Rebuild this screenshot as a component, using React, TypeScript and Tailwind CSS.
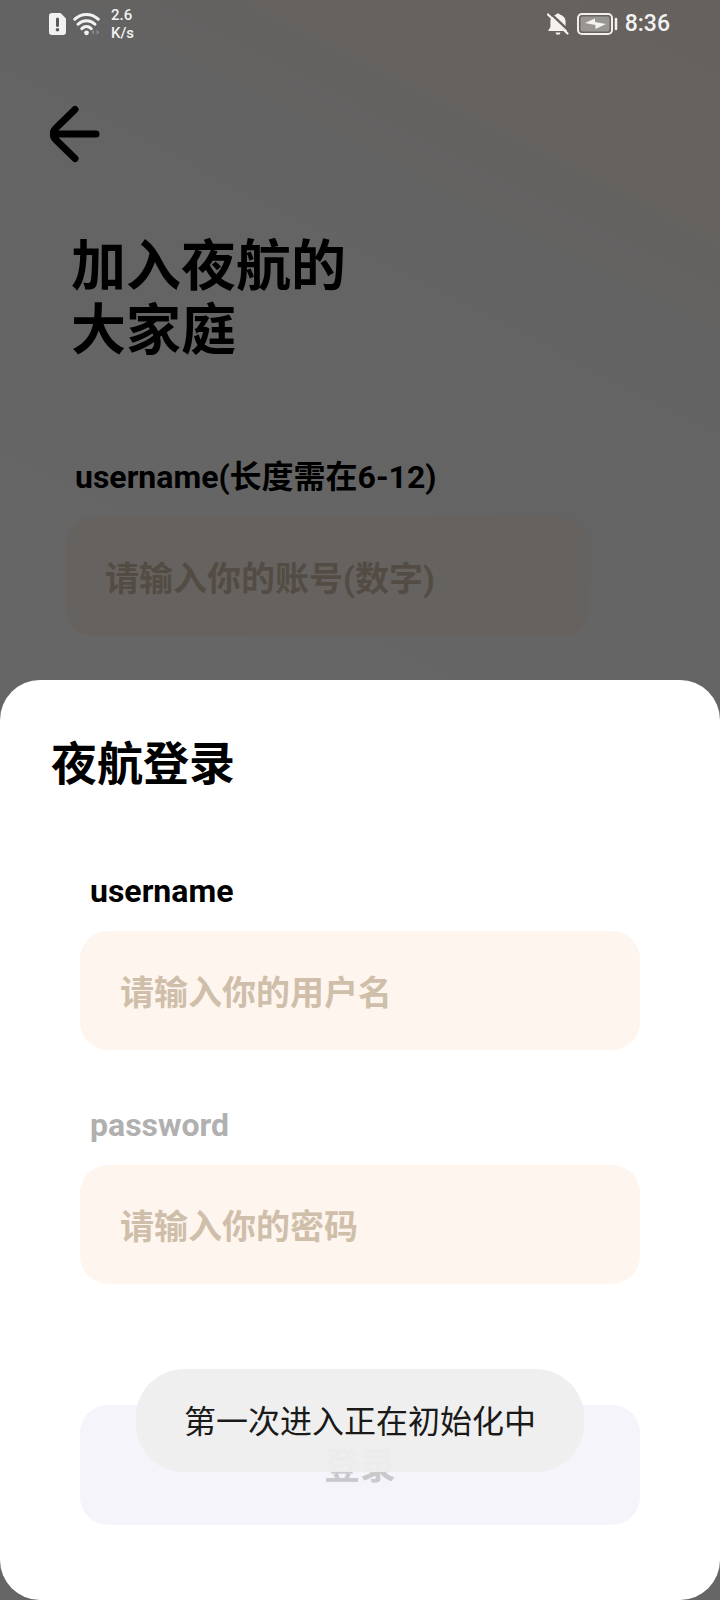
import { useState } from "react";

function SimAlertIcon() {
  return (
    <svg width="17" height="22" viewBox="0 0 17 22" aria-hidden="true">
      <path d="M3 0h8.5L17 5.5V19a3 3 0 0 1-3 3H3a3 3 0 0 1-3-3V3a3 3 0 0 1 3-3z" fill="#f2f2f2" />
      <path d="M8.5 6v6.5" stroke="#5a5a5a" strokeWidth="3" strokeLinecap="round" />
      <circle cx="8.5" cy="16.8" r="1.8" fill="#5a5a5a" />
    </svg>
  );
}

function WifiIcon() {
  return (
    <svg width="28" height="24" viewBox="0 0 28 24" fill="none" aria-hidden="true">
      <g stroke="#f2f2f2" strokeWidth="3" strokeLinecap="round">
        <path d="M1.8 7.2c6.6-6.4 16.8-6.4 23.4 0" />
        <path d="M5 12.2c4.8-4.7 12.2-4.7 17 0" />
        <path d="M8.8 16.6c2.8-2.7 6.6-2.7 9.4 0" />
      </g>
      <circle cx="13.5" cy="20.8" r="2.4" fill="#f2f2f2" />
      <path d="M21 17.5l-2.5 2.8 2.5 2.5zM23.5 17.5v5.3l3-2.6z" fill="#8a8a8a" />
    </svg>
  );
}

function BellOffIcon() {
  return (
    <svg width="22" height="22" viewBox="0 0 22 22" fill="none" aria-hidden="true">
      <path
        d="M11 0.5a2 2 0 0 1 2 1.2c3.6.7 5.6 3.6 5.6 7v5.3l2.4 4H1l2.4-4V8.700c0-3.400 2-6.300 5.600-7a2 2 0 0 1 2-1.200z"
        fill="#f5f1ee"
      />
      <path d="M8.500 19.500h5a2.500 2.200 0 0 1-5 0z" fill="#f5f1ee" />
      <path d="M2.500 -0.500L22 18" stroke="#65605d" strokeWidth="2.400" />
      <path d="M1 1.500L20.500 20.500" stroke="#f5f1ee" strokeWidth="2.200" strokeLinecap="round" />
    </svg>
  );
}

function BatteryIcon() {
  return (
    <svg width="42" height="22" viewBox="0 0 42 22" fill="none" aria-hidden="true">
      <rect x="1" y="1" width="34" height="20" rx="4" stroke="#f2efec" strokeWidth="2" />
      <rect x="3.5" y="3.5" width="29" height="15" rx="2" fill="#999693" />
      <path d="M8 10l10-4.500v3.500l11 2-10.500 5v-4z" fill="#f5f3f0" />
      <path d="M39 6v10" stroke="#f2efec" strokeWidth="2.5" strokeLinecap="round" />
    </svg>
  );
}

function StatusBar() {
  return (
    <div className="relative z-10 flex h-12 items-center justify-between pr-[50px] pl-[49px] text-[#f2f2f2]">
      <div className="flex items-center">
        <SimAlertIcon />
        <div className="ml-[7px]">
          <WifiIcon />
        </div>
        <div className="ml-[10px] text-[15px] leading-[18px] font-medium">
          <div>2.6</div>
          <div>K/s</div>
        </div>
      </div>
      <div className="flex items-center">
        <BellOffIcon />
        <div className="ml-2">
          <BatteryIcon />
        </div>
        <span className="ml-[6px] text-[23px] leading-[28px] font-medium">8:36</span>
      </div>
    </div>
  );
}

type FieldProps = {
  id: string;
  label: string;
  placeholder: string;
  type?: string;
  muted?: boolean;
  value: string;
  onChange: (value: string) => void;
};

function Field({ id, label, placeholder, type = "text", muted, value, onChange }: FieldProps) {
  return (
    <div className="flex flex-col gap-5">
      <label
        htmlFor={id}
        className={
          muted
            ? "pl-[10px] text-[32px] leading-[40px] font-bold text-[#b0b0b0]"
            : "pl-[10px] text-[32px] leading-[40px] font-bold text-black"
        }
      >
        {label}
      </label>
      <input
        id={id}
        type={type}
        value={value}
        placeholder={placeholder}
        onChange={(e) => onChange(e.target.value)}
        className="h-[119px] w-full rounded-[28px] bg-[#fef5ee] px-10 pt-1 text-[34px] font-bold text-black outline-none placeholder:text-[#cfbfaa]"
      />
    </div>
  );
}

export default function App() {
  const [account, setAccount] = useState("");
  const [username, setUsername] = useState("");
  const [password, setPassword] = useState("");

  return (
    <div className="relative flex min-h-screen flex-col bg-[linear-gradient(207deg,#fff3ea_0%,#fcf5f0_12%,#f8f8f8_18%,#ffffff_50%)] font-[Roboto,'Noto_Sans_CJK_SC',sans-serif]">
      {/* dims the register page behind the sheet */}
      <div className="absolute inset-0 z-[1] bg-black/60" />

      <StatusBar />

      <main className="pt-[57px] pb-11">
        <button type="button" aria-label="返回" className="ml-[50px] block">
          <svg width="50" height="58" viewBox="0 0 50 58" fill="none" aria-hidden="true">
            <path
              d="M25 4.5L6 23q-6 6 0 12L25 53.5M6 29H46"
              stroke="#000"
              strokeWidth="7"
              strokeLinecap="round"
              strokeLinejoin="round"
            />
          </svg>
        </button>
        <h1 className="mt-[71px] pl-[71px] text-[55px] leading-[64px] font-bold">
          加入夜航的
          <br />
          大家庭
        </h1>
        <div className="mt-[95px] mr-[130px] ml-[65px]">
          <Field
            id="register-account"
            label="username(长度需在6-12)"
            placeholder="请输入你的账号(数字)"
            value={account}
            onChange={setAccount}
          />
        </div>
      </main>

      <section className="relative z-10 grow rounded-[40px] bg-white pt-[52px] pb-[75px]">
        <h2 className="pl-[51px] text-[46px] leading-[64px] font-bold">夜航登录</h2>
        <form className="mt-[75px] px-20" onSubmit={(e) => e.preventDefault()}>
          <div className="flex flex-col gap-[55px]">
            <Field
              id="login-username"
              label="username"
              placeholder="请输入你的用户名"
              value={username}
              onChange={setUsername}
            />
            <Field
              id="login-password"
              label="password"
              placeholder="请输入你的密码"
              type="password"
              muted
              value={password}
              onChange={setPassword}
            />
          </div>
          <button
            type="submit"
            className="mt-[121px] h-[120px] w-full rounded-[28px] bg-[#f4f4fa] pt-1 text-[36px] font-bold text-[#c9c9cc]"
          >
            登录
          </button>
        </form>

        <div
          role="status"
          className="absolute bottom-32 left-1/2 -translate-x-1/2 rounded-[48px] bg-[#eeeeee]/95 px-12 pt-[33px] pb-[30px] text-[32px] leading-[40px] whitespace-nowrap text-[#1a1a1a]"
        >
          第一次进入正在初始化中
        </div>
      </section>
    </div>
  );
}
